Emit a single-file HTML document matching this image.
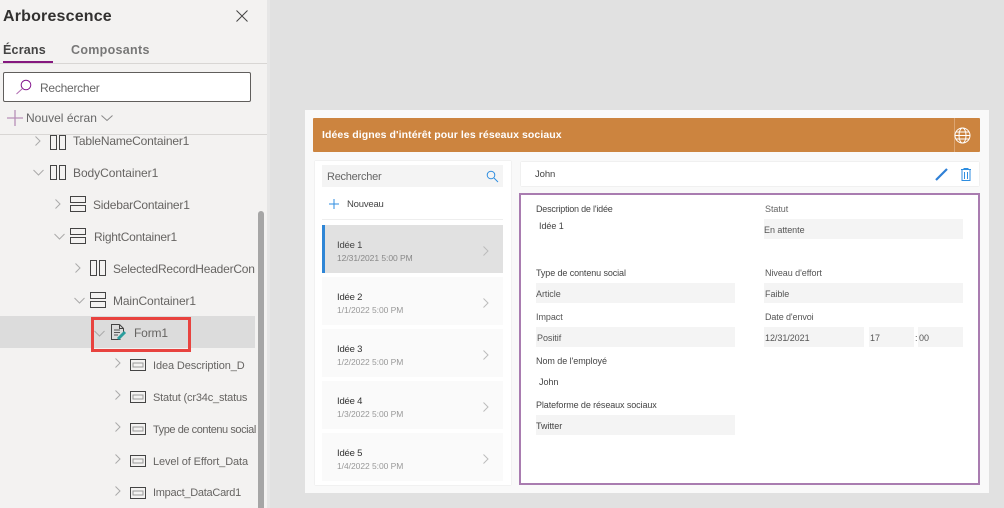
<!DOCTYPE html>
<html><head><meta charset="utf-8"><style>
html,body{margin:0;padding:0}
body{width:1004px;height:508px;overflow:hidden;position:relative;background:#e1e1e1;font-family:"Liberation Sans",sans-serif}
.a{position:absolute}
.t{position:absolute;white-space:nowrap;line-height:14px;color:#444}
.tree{font-size:12px;color:#666462;letter-spacing:-.15px}
.s{font-size:11px}
.f{font-size:9px;color:#444;letter-spacing:-.05px}
.box{position:absolute;background:#f4f4f4;height:20px}
.card{position:absolute;left:322px;width:181px;height:48px;background:#fafafa}
.n{font-size:9.500px;color:#333;letter-spacing:-.2px}
.d{font-size:8.500px;color:#999;letter-spacing:-.05px}
svg{position:absolute;overflow:visible}
</style></head><body>
<div class="a" style="left:0;top:0;width:267px;height:508px;background:#f3f2f1"></div>
<div class="a" style="left:267px;top:0;width:3px;height:508px;background:#e6e6e6"></div>
<div class="t" style="left:3px;top:8px;font-size:16px;line-height:18px;font-weight:bold;color:#323130;letter-spacing:.18px">Arborescence</div>
<svg style="left:236px;top:10px" width="12" height="12" fill="none" stroke="#444" stroke-width="1"><path d="M.5.5l11 11M11.500.5l-11 11"/></svg>
<div class="t" style="left:3px;top:43px;font-size:12.500px;font-weight:bold;color:#444;letter-spacing:.2px">Écrans</div>
<div class="t" style="left:71px;top:43px;font-size:12.500px;font-weight:bold;color:#777;letter-spacing:.3px">Composants</div>
<div class="a" style="left:0;top:63px;width:267px;height:1px;background:#d8d6d4"></div>
<div class="a" style="left:3px;top:61px;width:50px;height:2px;background:#85187f"></div>
<div class="a" style="left:3px;top:72px;width:246px;height:28px;background:#fff;border:1px solid #605e5c;border-radius:2px"></div>
<svg style="left:15px;top:78px" width="18" height="18" fill="none"><circle cx="11" cy="7" r="4.800" stroke="#85188f"/><path d="M7.500 10.500L1.500 16" stroke="#b06ab0" stroke-width="1"/></svg>
<div class="t" style="left:40px;top:81px;font-size:12px;color:#666;letter-spacing:-.25px">Rechercher</div>
<svg style="left:7px;top:110px" width="16" height="16" stroke="#b78fb8" stroke-width="1.300"><path d="M8 0v16M0 8h16"/></svg>
<div class="t" style="left:26px;top:111px;font-size:12px;color:#666;letter-spacing:.02px">Nouvel écran</div>
<svg style="left:101px;top:115px" width="12" height="6" fill="none" stroke="#888"><path d="M.5.500L6 5.500 11.500.5"/></svg>
<div class="a" style="left:0;top:134px;width:267px;height:1px;background:#d8d6d4"></div>
<div class="a" style="left:0;top:316px;width:255px;height:32px;background:#dcdcdc"></div>
<div class="a" style="left:258px;top:211px;width:6px;height:297px;background:#a6a6a6;border-radius:3px 3px 0 0"></div>

<svg style="left:35px;top:136px" width="6" height="10" fill="none" stroke="#aaa"><path d="M.5.500L5 5 .5 9.500"/></svg>
<svg style="left:50px;top:135px" width="16" height="15" fill="none" stroke="#444"><rect x=".5" y=".5" width="6" height="14"/><rect x="9.500" y=".5" width="6" height="14"/></svg>
<div class="t tree" style="left:73px;top:134px;letter-spacing:-.17px">TableNameContainer1</div>
<svg style="left:33px;top:169px" width="11" height="7" fill="none" stroke="#aaa"><path d="M.5 1L5.500 6 10.500 1"/></svg>
<svg style="left:50px;top:165px" width="16" height="15" fill="none" stroke="#444"><rect x=".5" y=".5" width="6" height="14"/><rect x="9.500" y=".5" width="6" height="14"/></svg>
<div class="t tree" style="left:73px;top:166px;letter-spacing:-.06px">BodyContainer1</div>
<svg style="left:55px;top:199px" width="6" height="10" fill="none" stroke="#aaa"><path d="M.5.500L5 5 .5 9.500"/></svg>
<svg style="left:70px;top:196px" width="16" height="16" fill="none" stroke="#444"><rect x=".5" y=".5" width="15" height="6"/><rect x=".5" y="9.500" width="15" height="6"/></svg>
<div class="t tree" style="left:93px;top:198px;letter-spacing:-.2px">SidebarContainer1</div>
<svg style="left:54px;top:233px" width="11" height="7" fill="none" stroke="#aaa"><path d="M.5 1L5.500 6 10.500 1"/></svg>
<svg style="left:70px;top:228px" width="16" height="16" fill="none" stroke="#444"><rect x=".5" y=".5" width="15" height="6"/><rect x=".5" y="9.500" width="15" height="6"/></svg>
<div class="t tree" style="left:94px;top:230px;letter-spacing:-.25px">RightContainer1</div>
<svg style="left:75px;top:263px" width="6" height="10" fill="none" stroke="#aaa"><path d="M.5.500L5 5 .5 9.500"/></svg>
<svg style="left:90px;top:260px" width="16" height="16" fill="none" stroke="#444"><rect x=".5" y=".5" width="6" height="15"/><rect x="9.500" y=".5" width="6" height="15"/></svg>
<div class="a" style="left:113px;top:262px;width:142px;height:14px;overflow:hidden"><div class="t tree" style="left:0;top:0;letter-spacing:-.22px">SelectedRecordHeaderContainer1</div></div>
<svg style="left:74px;top:297px" width="11" height="7" fill="none" stroke="#aaa"><path d="M.5 1L5.500 6 10.500 1"/></svg>
<svg style="left:90px;top:292px" width="16" height="16" fill="none" stroke="#444"><rect x=".5" y=".5" width="15" height="6"/><rect x=".5" y="9.500" width="15" height="6"/></svg>
<div class="t tree" style="left:113px;top:294px;letter-spacing:-.13px">MainContainer1</div>
<div class="a" style="left:91px;top:317px;width:94px;height:29px;border:3px solid #e8433f"></div>
<svg style="left:94px;top:330px" width="11" height="7" fill="none" stroke="#aaa"><path d="M.5 1L5.500 6 10.500 1"/></svg>
<svg style="left:111px;top:324px" width="16" height="17" fill="none"><path d="M8.500.5H.5v15h9M8.500.5l4 4v4M8.500.5v4h4" stroke="#444"/><path d="M3 6h6M3 8.500h6M3 11h4" stroke="#555"/><path d="M7 15l7-7" stroke="#2a9d9d" stroke-width="3"/></svg>
<div class="t tree" style="left:134px;top:326px">Form1</div>

<svg style="left:115px;top:358px" width="6" height="10" fill="none" stroke="#aaa"><path d="M.5.500L5 5 .5 9.500"/></svg>
<svg style="left:130px;top:359px" width="16" height="12" fill="none"><rect x=".5" y=".5" width="15" height="11" stroke="#444"/><rect x="3" y="4" width="10" height="4" stroke="#999"/></svg>
<div class="t tree s" style="left:153px;top:359px;letter-spacing:-.11px">Idea Description_D</div>
<svg style="left:115px;top:390px" width="6" height="10" fill="none" stroke="#aaa"><path d="M.5.500L5 5 .5 9.500"/></svg>
<svg style="left:130px;top:391px" width="16" height="12" fill="none"><rect x=".5" y=".5" width="15" height="11" stroke="#444"/><rect x="3" y="4" width="10" height="4" stroke="#999"/></svg>
<div class="t tree s" style="left:153px;top:391px;letter-spacing:-.18px">Statut (cr34c_status</div>
<svg style="left:115px;top:422px" width="6" height="10" fill="none" stroke="#aaa"><path d="M.5.500L5 5 .5 9.500"/></svg>
<svg style="left:130px;top:423px" width="16" height="12" fill="none"><rect x=".5" y=".5" width="15" height="11" stroke="#444"/><rect x="3" y="4" width="10" height="4" stroke="#999"/></svg>
<div class="t tree s" style="left:153px;top:423px;letter-spacing:-.44px">Type de contenu social</div>
<svg style="left:115px;top:454px" width="6" height="10" fill="none" stroke="#aaa"><path d="M.5.500L5 5 .5 9.500"/></svg>
<svg style="left:130px;top:455px" width="16" height="12" fill="none"><rect x=".5" y=".5" width="15" height="11" stroke="#444"/><rect x="3" y="4" width="10" height="4" stroke="#999"/></svg>
<div class="t tree s" style="left:153px;top:455px;letter-spacing:-.1px">Level of Effort_Data</div>
<svg style="left:115px;top:486px" width="6" height="10" fill="none" stroke="#aaa"><path d="M.5.500L5 5 .5 9.500"/></svg>
<svg style="left:130px;top:487px" width="16" height="12" fill="none"><rect x=".5" y=".5" width="15" height="11" stroke="#444"/><rect x="3" y="4" width="10" height="4" stroke="#999"/></svg>
<div class="t tree s" style="left:153px;top:486px;letter-spacing:-.27px">Impact_DataCard1</div>

<div class="a" style="left:305px;top:110px;width:684px;height:383px;background:#f9f9f9"></div>
<div class="a" style="left:313px;top:118px;width:667px;height:34px;background:#cc843f;border-radius:1px"></div>
<div class="t" style="left:322px;top:128px;font-size:10.500px;font-weight:bold;color:#fff;letter-spacing:.08px">Idées dignes d'intérêt pour les réseaux sociaux</div>
<div class="a" style="left:954px;top:118px;width:1px;height:34px;background:#dca571"></div>
<svg style="left:954px;top:127px" width="17" height="17" fill="none" stroke="#fff" stroke-width="1"><circle cx="8.500" cy="8.500" r="7.500"/><ellipse cx="8.500" cy="8.500" rx="3.500" ry="7.500"/><path d="M1 8.500h15M2 5h13M2 12h13"/></svg>

<div class="a" style="left:315px;top:161px;width:196px;height:324px;background:#fff;box-shadow:0 0 1px #d0d0d0"></div>
<div class="a" style="left:322px;top:165px;width:181px;height:22px;background:#f4f4f4"></div>
<div class="t" style="left:327px;top:170px;font-size:11px;color:#666;letter-spacing:-.25px">Rechercher</div>
<svg style="left:486px;top:170px" width="13" height="13" fill="none" stroke="#2f8ee0" stroke-width="1"><circle cx="5" cy="5" r="3.800"/><path d="M8 8l4 4"/></svg>
<svg style="left:329px;top:199px" width="10" height="10" stroke="#2f8ee0"><path d="M5 0v10M0 5h10"/></svg>
<div class="t" style="left:347px;top:198px;font-size:9.500px;color:#444;letter-spacing:-.2px">Nouveau</div>
<div class="a" style="left:322px;top:219px;width:181px;height:1px;background:#eee"></div>
<div class="a" style="left:322px;top:225px;width:181px;height:48px;background:#e1e1e1"></div>
<div class="a" style="left:322px;top:225px;width:3px;height:48px;background:#2f86d6"></div>
<div class="card" style="top:277px"></div><div class="card" style="top:329px"></div><div class="card" style="top:381px"></div><div class="card" style="top:433px"></div>
<div class="t n" style="left:337px;top:239px;color:#444">Idée 1</div><div class="t d" style="left:337px;top:251px;color:#888">12/31/2021 5:00 PM</div>
<div class="t n" style="left:337px;top:291px">Idée 2</div><div class="t d" style="left:337px;top:303px">1/1/2022 5:00 PM</div>
<div class="t n" style="left:337px;top:343px">Idée 3</div><div class="t d" style="left:337px;top:355px">1/2/2022 5:00 PM</div>
<div class="t n" style="left:337px;top:395px">Idée 4</div><div class="t d" style="left:337px;top:407px">1/3/2022 5:00 PM</div>
<div class="t n" style="left:337px;top:447px">Idée 5</div><div class="t d" style="left:337px;top:459px">1/4/2022 5:00 PM</div>
<svg style="left:483px;top:246px" width="6" height="10" fill="none" stroke="#bbb"><path d="M.5.500L5 5 .5 9.500"/></svg>
<svg style="left:483px;top:298px" width="6" height="10" fill="none" stroke="#bbb"><path d="M.5.500L5 5 .5 9.500"/></svg>
<svg style="left:483px;top:350px" width="6" height="10" fill="none" stroke="#bbb"><path d="M.5.500L5 5 .5 9.500"/></svg>
<svg style="left:483px;top:402px" width="6" height="10" fill="none" stroke="#bbb"><path d="M.5.500L5 5 .5 9.500"/></svg>
<svg style="left:483px;top:454px" width="6" height="10" fill="none" stroke="#bbb"><path d="M.5.500L5 5 .5 9.500"/></svg>

<div class="a" style="left:521px;top:162px;width:458px;height:24px;background:#fff;box-shadow:0 0 1px #ccc"></div>
<div class="t" style="left:535px;top:168px;font-size:9.500px;color:#444;letter-spacing:-.1px">John</div>
<svg style="left:935px;top:168px" width="13" height="13" fill="none"><path d="M1 12L12 1" stroke="#2f80d6" stroke-width="2.200"/></svg>
<svg style="left:961px;top:168px" width="10" height="13" fill="none" stroke="#2f8ee0"><path d="M0 1.500h10M3 1.500V.5h4v1M1 2v10.500h8V2M3.500 4v7M6.500 4v7"/></svg>

<div class="a" style="left:519px;top:193px;width:457px;height:288px;background:#fff;border:2px solid #a97cb0"></div>
<div class="t f" style="left:536px;top:202px;letter-spacing:-.2px">Description de l'idée</div>
<div class="t f" style="left:539px;top:219px">Idée 1</div>
<div class="t f" style="left:765px;top:202px;color:#666">Statut</div>
<div class="box" style="left:764px;top:219px;width:199px"></div><div class="t f" style="left:764px;top:223px;color:#555">En attente</div>
<div class="t f" style="left:536px;top:266px;letter-spacing:-.1px">Type de contenu social</div>
<div class="box" style="left:536px;top:283px;width:199px"></div><div class="t f" style="left:536px;top:287px;color:#555">Article</div>
<div class="t f" style="left:765px;top:266px;color:#555">Niveau d'effort</div>
<div class="box" style="left:764px;top:283px;width:199px"></div><div class="t f" style="left:765px;top:287px;color:#555">Faible</div>
<div class="t f" style="left:536px;top:310px;color:#555">Impact</div>
<div class="box" style="left:536px;top:327px;width:199px"></div><div class="t f" style="left:537px;top:331px;color:#555">Positif</div>
<div class="t f" style="left:765px;top:310px;color:#555;letter-spacing:-.1px">Date d'envoi</div>
<div class="box" style="left:764px;top:327px;width:100px"></div><div class="t f" style="left:765px;top:331px;color:#555">12/31/2021</div>
<div class="box" style="left:869px;top:327px;width:45px"></div><div class="t f" style="left:870px;top:331px;color:#555">17</div>
<div class="t f" style="left:915px;top:331px;color:#555">:</div>
<div class="box" style="left:918px;top:327px;width:45px"></div><div class="t f" style="left:919px;top:331px;color:#555">00</div>
<div class="t f" style="left:536px;top:354px">Nom de l'employé</div>
<div class="t f" style="left:539px;top:375px">John</div>
<div class="t f" style="left:536px;top:398px;letter-spacing:-.1px">Plateforme de réseaux sociaux</div>
<div class="box" style="left:536px;top:415px;width:199px"></div><div class="t f" style="left:536px;top:419px">Twitter</div>
</body></html>
